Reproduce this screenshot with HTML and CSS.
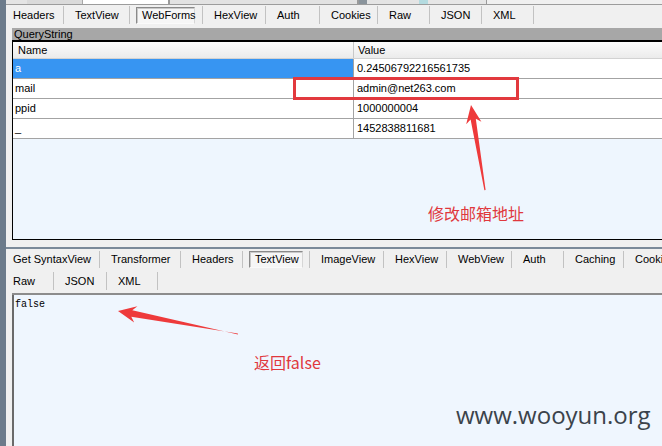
FILE: index.html
```html
<!DOCTYPE html>
<html>
<head>
<meta charset="utf-8">
<link rel="stylesheet" href="styles.css">
</head>
<body>
<div class="app">
  <div class="strip"></div>
  <div class="main">
    <div class="topstrip">
      <div class="ts ts-a"></div>
      <div class="ts ts-b"></div>
      <div class="ts ts-c"></div>
      <div class="ts ts-d"></div>
      <div class="ts ts-e"></div>
      <div class="ts ts-f"></div>
      <div class="ts ts-g"></div>
    </div>
    <div class="tabs tabs1">
      <div class="tab">Headers</div>
      <div class="tab">TextView</div>
      <div class="tab boxed"><span class="box">WebForms</span></div>
      <div class="tab">HexView</div>
      <div class="tab">Auth</div>
      <div class="tab">Cookies</div>
      <div class="tab">Raw</div>
      <div class="tab">JSON</div>
      <div class="tab">XML</div>
    </div>
    <div class="qs">QueryString</div>
    <div class="grid">
      <div class="ghead">
        <div class="hc1">Name</div>
        <div class="hc2">Value</div>
      </div>
      <div class="grow">
        <div class="c1 selcell">a</div>
        <div class="c2">0.24506792216561735</div>
      </div>
      <div class="grow">
        <div class="c1">mail</div>
        <div class="c2">admin@net263.com</div>
      </div>
      <div class="grow">
        <div class="c1">ppid</div>
        <div class="c2">1000000004</div>
      </div>
      <div class="grow">
        <div class="c1">_</div>
        <div class="c2">1452838811681</div>
      </div>
    </div>
    <div class="splitter"></div>
    <div class="tabs tabs2">
      <div class="tab">Get SyntaxView</div>
      <div class="tab">Transformer</div>
      <div class="tab">Headers</div>
      <div class="tab boxed"><span class="box box2">TextView</span></div>
      <div class="tab">ImageView</div>
      <div class="tab">HexView</div>
      <div class="tab">WebView</div>
      <div class="tab">Auth</div>
      <div class="tab">Caching</div>
      <div class="tab last">Cookies</div>
    </div>
    <div class="tabs tabs3">
      <div class="tab">Raw</div>
      <div class="tab">JSON</div>
      <div class="tab">XML</div>
    </div>
    <div class="textarea">false</div>
  </div>
</div>

<div class="redbox"></div>
<svg class="overlay" width="662" height="446" viewBox="0 0 662 446">
  <polygon fill="#ee3a3b" points="485.6,190 475.8,118.8 481.4,121.8 471,105 466.2,124.2 470.6,119.4 484.4,190.2"/>
  <polygon fill="#ee3a3b" points="238,334.5 132.3,310.3 137.4,306.2 118,311 134.2,322.6 131.3,316.8 237.8,333.5"/>
</svg>
<div class="note note1">修改邮箱地址</div>
<div class="note note2">返回false</div>
<div class="watermark">www.wooyun.org</div>
</body>
</html>
```

FILE: styles.css
```css
html, body {
  margin: 0;
  padding: 0;
}
body {
  width: 662px;
  height: 446px;
  overflow: hidden;
  position: relative;
  background: #f0f0f0;
  font-family: "Liberation Sans", Tahoma, Arial, sans-serif;
  font-size: 11px;
  color: #000;
}
.app {
  display: flex;
  height: 446px;
}
.strip {
  flex: none;
  width: 6px;
  background: #6c7b8b;
}
.main {
  flex: 1;
  min-width: 0;
  padding-left: 6px;
  display: flex;
  flex-direction: column;
}

/* top remnant strip */
.topstrip {
  height: 4px;
  margin-left: -6px;
  border-bottom: 1px solid #9c9c9c;
  display: flex;
  background: #ececec;
}
.ts { height: 4px; box-sizing: border-box; }
.ts-a { width: 21px; background: #e4e4e4; }
.ts-b { width: 56px; background: #dadada; border-right: 1px solid #a8a8a8; }
.ts-c { width: 87px; background: #ffffff; border-right: 2px solid #9a9a9a; }
.ts-d { width: 189px; background: #e2e2e2; border-right: 2px solid #9a9a9a; }
.ts-e { width: 60px; background: #e4e4e4; border-left: 8px solid #8a949c; }
.ts-f { width: 68px; background: #e6e6e6; border-left: 9px solid #b4dbe0; border-right: 1px solid #9a9a9a; }
.ts-g { flex: 1; background: #f0f0f0; }

/* tabs */
.tabs {
  display: grid;
  align-items: start;
}
.tab {
  height: 18px;
  line-height: 18px;
  padding-left: 11px;
  border-right: 1px solid #c2c2c2;
  white-space: nowrap;
  overflow: hidden;
  box-sizing: border-box;
}
.tab:first-child { padding-left: 1px; }
.tab.last { border-right: none; }
.tab.boxed { padding-left: 6px; }
.box {
  display: block;
  box-sizing: border-box;
  width: 59px;
  height: 17px;
  margin-top: 1px;
  line-height: 15px;
  padding-left: 5px;
  background: #f6f6f6;
  border: 1px solid;
  border-color: #8a8a8a #d6d6d6 #fafafa #8a8a8a;
  box-shadow: inset 1px 1px 0 #c9c9c9;
}
.box2 { width: 54px; }

.tabs1 {
  height: 23px;
  grid-template-columns: 52px 66px 73px 63px 54px 58px 52px 52px 52px;
}
.tabs1 .tab { margin-top: 1px; }

.tabs2 {
  height: 21px;
  grid-template-columns: 88px 81px 62px 67px 74px 63px 65px 52px 60px 1fr;
}
.tabs2 .tab { margin-top: 2px; height: 17px; line-height: 17px; }
.tabs2 .box { margin-top: 0; }

.tabs3 {
  height: 25px;
  box-sizing: border-box;
  border-bottom: 2px solid #8c8c8c;
  grid-template-columns: 42px 53px 51px;
}
.tabs3 .tab { margin-top: 2px; height: 18px; }

/* query string grid */
.qs {
  height: 12px;
  line-height: 12px;
  padding-left: 2px;
  background: #a7a7a7;
  overflow: hidden;
}
.grid {
  height: 200px;
  box-sizing: border-box;
  border-top: 2px solid #000;
  border-left: 1px solid #000;
  border-bottom: 1px solid #000;
  background: #eef6fe;
}
.ghead {
  display: grid;
  grid-template-columns: 341px 1fr;
  height: 17px;
  box-sizing: border-box;
  border-bottom: 1px solid #d2d2d2;
  background: linear-gradient(#fcfcfc, #ebebeb);
  line-height: 16px;
}
.hc1 { padding-left: 5px; border-right: 1px solid #c8c8c8; }
.hc2 { padding-left: 4px; }
.grow {
  display: grid;
  grid-template-columns: 341px 1fr;
  height: 20px;
  box-sizing: border-box;
  border-bottom: 1px solid #a3a3a3;
  background: #fff;
  line-height: 19px;
}
.c1 { padding-left: 2px; border-right: 1px solid #a3a3a3; }
.c2 { padding-left: 3px; }
.selcell { background: #3795f2; color: #fff; }

.splitter {
  height: 9px;
  box-sizing: border-box;
  margin-left: -6px;
  border-bottom: 2px solid #7b8a99;
  background: #f0f0f0;
}

.textarea {
  flex: 1;
  border-left: 2px solid #6a6a6a;
  background: #eff6fe;
  font-family: "Liberation Mono", "Courier New", monospace;
  font-size: 10px;
  line-height: 12px;
  padding: 4px 0 0 1px;
}

/* annotations */
.redbox {
  position: absolute;
  left: 293px;
  top: 77px;
  width: 226px;
  height: 23px;
  box-sizing: border-box;
  border: 3px solid #e2393e;
}
.overlay {
  position: absolute;
  left: 0;
  top: 0;
}
.note {
  position: absolute;
  font-family: "Noto Sans CJK SC", "Noto Sans", sans-serif;
  font-size: 16px;
  line-height: 18px;
  color: #e0383d;
  white-space: nowrap;
}
.note1 { left: 428px; top: 204px; }
.note2 { left: 254px; top: 353px; }
.watermark {
  position: absolute;
  left: 456px;
  top: 399px;
  font-family: "Open Sans", "Noto Sans", sans-serif;
  font-size: 24px;
  line-height: 32px;
  color: #3b434b;
  white-space: nowrap;
}
```
